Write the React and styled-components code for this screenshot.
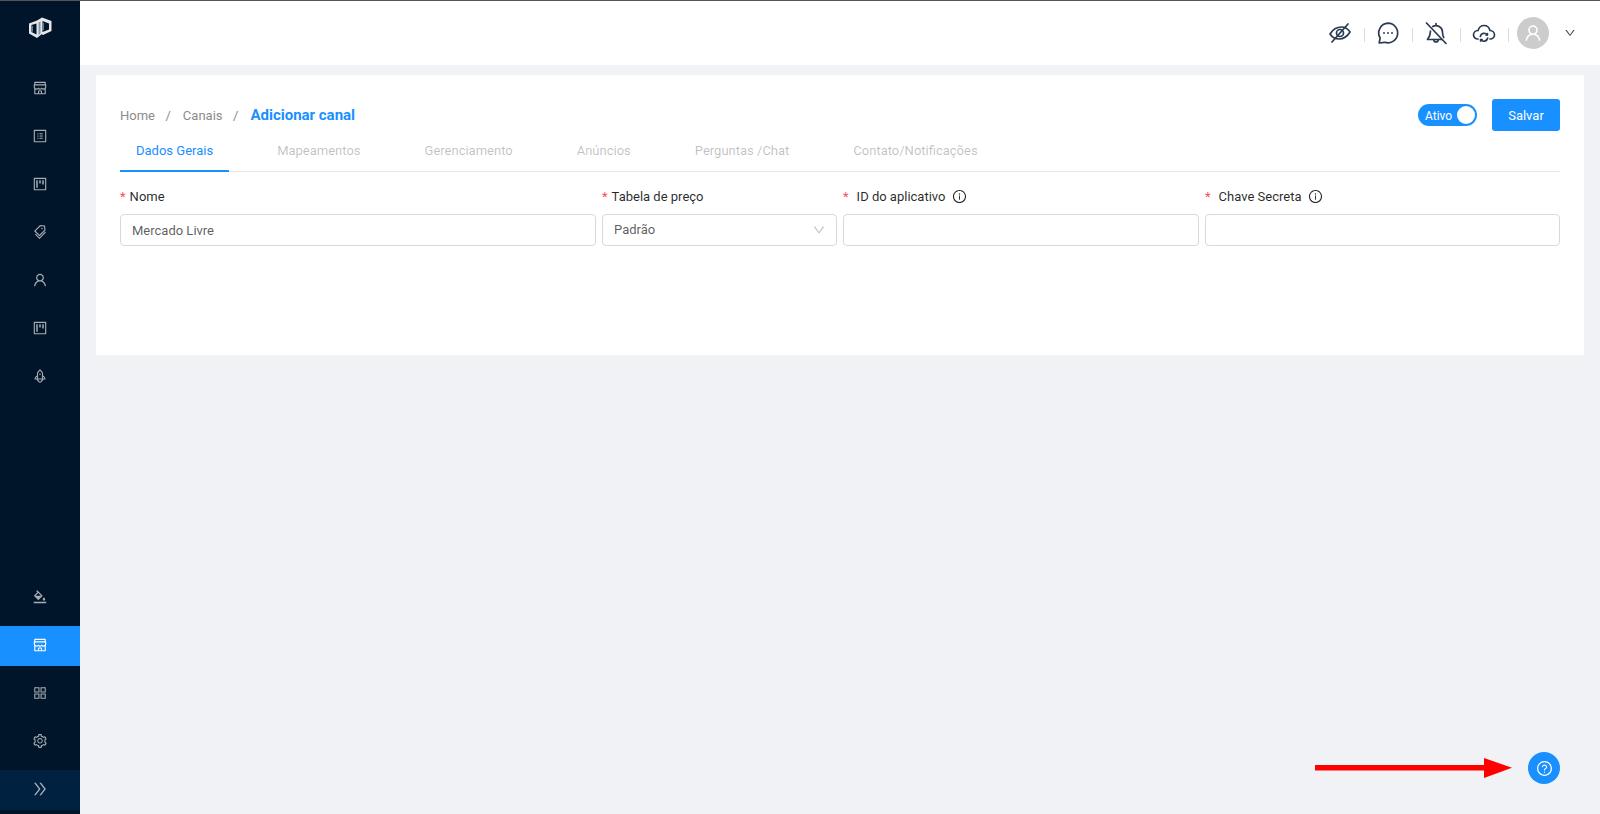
import React from "react";
import styled, { createGlobalStyle } from "styled-components";
import {
  AiOutlineShop,
  AiOutlineProfile,
  AiOutlineProject,
  AiOutlineTags,
  AiOutlineUser,
  AiOutlineRocket,
  AiOutlineBgColors,
  AiOutlineAppstore,
  AiOutlineSetting,
  AiOutlineDoubleRight,
  AiOutlineInfoCircle,
  AiOutlineDown,
  AiOutlineQuestionCircle,
} from "react-icons/ai";

const GlobalStyle = createGlobalStyle`
  html, body {
    margin: 0;
    height: 100%;
    overflow: hidden;
    font-family: Roboto, "Liberation Sans", sans-serif;
    background: #f0f2f5;
  }
  #root { height: 100%; }
  * { box-sizing: border-box; }
`;

const Page = styled.div`
  display: flex;
  flex-direction: column;
  height: 814px;
`;

const TopLine = styled.div`
  height: 1px;
  background: #555;
  flex: none;
`;

const Body = styled.div`
  display: flex;
  flex: 1;
  min-height: 0;
`;

const Sidebar = styled.aside`
  width: 80px;
  flex: none;
  display: flex;
  flex-direction: column;
  background: #001529;
  padding-bottom: 4px;
`;

const LogoBox = styled.div`
  height: 53px;
  display: flex;
  align-items: center;
  justify-content: center;
  margin-bottom: 14px;
`;

const MenuList = styled.nav`
  display: flex;
  flex-direction: column;
  gap: 8px;
`;

const BottomMenu = styled(MenuList)`
  margin-top: auto;
`;

const MenuItem = styled.div`
  height: 40px;
  display: flex;
  align-items: center;
  justify-content: center;
  padding-bottom: ${(p) => (p.$raised ? "2px" : "0")};
  font-size: 16px;
  color: ${(p) => (p.$active ? "#fff" : "rgba(255,255,255,.65)")};
  background: ${(p) => (p.$active ? "#1890ff" : "transparent")};
`;

const Collapse = styled.div`
  height: 40px;
  display: flex;
  align-items: center;
  justify-content: center;
  margin-top: 8px;
  padding-bottom: 2px;
  font-size: 18px;
  color: rgba(255, 255, 255, 0.65);
  background: #002140;
`;

const Main = styled.main`
  flex: 1;
  min-width: 0;
  display: flex;
  flex-direction: column;
`;

const Header = styled.header`
  height: 64px;
  background: #fff;
  display: flex;
  align-items: center;
  justify-content: flex-end;
  padding-right: 24px;
  flex: none;
`;

const HeaderIcon = styled.div`
  width: 24px;
  height: 24px;
  display: flex;
  align-items: center;
  justify-content: center;
  color: #2a3b52;
`;

const HeaderDivider = styled.div`
  width: 1px;
  height: 14px;
  margin: 4px 11px 0 12px;
  background: #ddd;
  align-self: center;
`;

const Avatar = styled.div`
  width: 32px;
  height: 32px;
  margin-left: -3px;
  border-radius: 50%;
  background: #ccc;
  color: #fff;
  font-size: 20px;
  display: flex;
  align-items: center;
  justify-content: center;
`;

const Caret = styled.div`
  margin-left: 15px;
  font-size: 12px;
  color: #2a3b52;
  display: flex;
`;

const Card = styled.section`
  margin: 10px 16px 0;
  height: 280px;
  padding: 24px 24px 0;
  background: #fff;
`;

const TitleRow = styled.div`
  display: flex;
  align-items: center;
  justify-content: space-between;
  height: 32px;
  margin-bottom: 1px;
`;

const Breadcrumb = styled.div`
  display: flex;
  align-items: center;
  font-size: 13px;
  color: #8c8c8c;
`;

const Crumb = styled.span`
  color: ${(p) => (p.$current ? "#1890ff" : "#8c8c8c")};
  font-weight: ${(p) => (p.$current ? 700 : 400)};
  font-size: ${(p) => (p.$current ? "15px" : "13px")};
`;

const Slash = styled.span`
  margin: 0 12px 0 10.5px;
`;

const Actions = styled.div`
  display: flex;
  align-items: center;
  gap: 15px;
`;

const Switch = styled.div`
  width: 59px;
  height: 22px;
  border-radius: 11px;
  background: #1890ff;
  color: #fff;
  font-size: 12px;
  display: flex;
  align-items: center;
  justify-content: space-between;
  padding: 0 2px 0 7px;
`;

const SwitchText = styled.span`
  margin-top: 2px;
`;

const Knob = styled.span`
  width: 18px;
  height: 18px;
  border-radius: 50%;
  background: #fff;
`;

const SaveButton = styled.button`
  width: 68px;
  height: 32px;
  border: 0;
  border-radius: 3px;
  background: #1890ff;
  color: #fff;
  font: 400 13px Roboto, sans-serif;
`;

const Tabs = styled.div`
  display: flex;
  gap: 32px;
  height: 40px;
  border-bottom: 1px solid #e8e8e8;
`;

const Tab = styled.div`
  height: 40px;
  padding: 0 16px;
  line-height: 38px;
  font-size: 13px;
  color: ${(p) => (p.$active ? "#1890ff" : "rgba(0,0,0,.25)")};
  border-bottom: 2px solid ${(p) => (p.$active ? "#1890ff" : "transparent")};
`;

const FormRow = styled.div`
  display: grid;
  grid-template-columns: 476px 235px 356px 355px;
  gap: 6px;
  margin-top: 15px;
`;

const Field = styled.div`
  display: flex;
  flex-direction: column;
`;

const Label = styled.label`
  height: 19px;
  margin-bottom: 8px;
  display: flex;
  align-items: center;
  font-size: 13px;
  color: rgba(0, 0, 0, 0.85);
`;

const Star = styled.span`
  color: #ff4d4f;
  margin-right: ${(p) => (p.$wide ? "8px" : "4px")};
`;

const Info = styled.span`
  display: flex;
  margin: -1px 0 0 7px;
  font-size: 15px;
`;

const Input = styled.div`
  height: 32px;
  display: flex;
  align-items: center;
  justify-content: space-between;
  padding: 0 10px 0 11px;
  border: 1px solid #d9d9d9;
  border-radius: 4px;
  font-size: 13px;
  color: rgba(0, 0, 0, 0.65);
  background: #fff;
`;

const SelectValue = styled.span`
  margin-top: -1px;
`;

const SelectArrow = styled.span`
  display: flex;
  font-size: 14px;
  color: #bfbfbf;
`;

const HelpButton = styled.div`
  position: fixed;
  right: 40px;
  bottom: 30px;
  width: 32px;
  height: 32px;
  border-radius: 50%;
  background: #1890ff;
  color: #fff;
  font-size: 17px;
  display: flex;
  align-items: center;
  justify-content: center;
`;

const Arrow = styled.svg`
  position: fixed;
  left: 1315px;
  top: 758px;
`;

const Logo = () => (
  <svg width="23" height="22" viewBox="0 0 23 22" strokeLinejoin="round">
    <path
      fillRule="evenodd"
      fill="#e3e6ea"
      d="M8 3.500 13 0.500 22.500 4V14L14 18 13 17.500V17L8 21 0 16.500V6.500ZM13.500 4V15L20 12.500V6.500ZM2.500 8V15L7.500 17.500V6.500Z"
    />
    <path d="M9.500 5.500 11.500 4.500V16.500L9.500 18Z" fill="#8d96a1" />
    <path d="M14.500 5.800V13.200M3.500 9V14.800" stroke="#6f7a87" strokeWidth="1" fill="none" />
  </svg>
);

const EyeIcon = () => (
  <svg width="24" height="24" viewBox="0 0 24 24" fill="none" stroke="currentColor" strokeWidth="1.700" strokeLinecap="round" strokeLinejoin="round">
    <path d="M2 13C5 8 9 6 13.500 6c3.500 0 6.500 2 8.500 5-3 5-7 7-11 7-4 0-7-2-9-5Z" />
    <circle cx="12" cy="12" r="3.500" />
    <path d="M4 21 20 3" />
  </svg>
);

const MessageIcon = () => (
  <svg width="24" height="24" viewBox="0 0 24 24" fill="none" stroke="currentColor" strokeWidth="1.700" strokeLinecap="round" strokeLinejoin="round">
    <path d="M12 2.200a9.800 9.800 0 1 1-3.200 19.100L3.200 22l.9-5A9.800 9.800 0 0 1 12 2.200Z" />
    <path d="M8 12h.01M12 12h.01M16 12h.01" strokeWidth="1.900" />
  </svg>
);

const BellIcon = () => (
  <svg width="24" height="24" viewBox="0 0 24 24" fill="none" stroke="currentColor" strokeWidth="1.700" strokeLinecap="round" strokeLinejoin="round">
    <path d="M2.500 2 22 22.500" />
    <path d="M12 2.500V4.500M8.800 5.500A6.500 6.500 0 0 1 18.500 11c0 2.500.4 4.200 1.200 5.500" />
    <path d="M6.500 10c0 3.500-1 6-3 8.500H17.500" />
    <path d="M9.800 18.700c0 3 4.400 3 4.400 0" />
  </svg>
);

const CloudSyncIcon = () => (
  <svg width="24" height="24" viewBox="0 0 24 24" fill="none" stroke="currentColor" strokeWidth="1.700" strokeLinecap="round" strokeLinejoin="round">
    <path d="M6 18C3.500 18 1.500 16.200 1.500 13.800C1.500 11.500 3.500 9.700 6 9.500 7 6.300 9.300 4.500 12 4.500c3 0 5.300 2 6 5 2.500.2 4.500 2 4.500 4.300S20.500 18 18 18" />
    <path d="M8.300 15.500a4 4 0 0 1 7-1.800M15.700 17a4 4 0 0 1-7 1.800" />
    <path d="M15.400 12.500v1.500h-1.500M8.600 20v-1.500h1.500" />
  </svg>
);

const topMenu = [AiOutlineShop, AiOutlineProfile, AiOutlineProject, AiOutlineTags, AiOutlineUser, AiOutlineProject, AiOutlineRocket];
const bottomMenu = [AiOutlineBgColors, AiOutlineShop, AiOutlineAppstore, AiOutlineSetting];
const headerIcons = [EyeIcon, MessageIcon, BellIcon, CloudSyncIcon];
const tabs = ["Dados Gerais", "Mapeamentos", "Gerenciamento", "Anúncios", "Perguntas /Chat", "Contato/Notificações"];

export default function App() {
  return (
    <Page>
      <GlobalStyle />
      <TopLine />
      <Body>
        <Sidebar>
          <LogoBox>
            <Logo />
          </LogoBox>
          <MenuList>
            {topMenu.map((Icon, i) => (
              <MenuItem key={i}>
                <Icon />
              </MenuItem>
            ))}
          </MenuList>
          <BottomMenu>
            {bottomMenu.map((Icon, i) => (
              <MenuItem key={i} $raised $active={i === 1}>
                <Icon />
              </MenuItem>
            ))}
          </BottomMenu>
          <Collapse>
            <AiOutlineDoubleRight />
          </Collapse>
        </Sidebar>
        <Main>
          <Header>
            {headerIcons.map((Icon, i) => (
              <React.Fragment key={i}>
                <HeaderIcon>
                  <Icon />
                </HeaderIcon>
                <HeaderDivider />
              </React.Fragment>
            ))}
            <Avatar>
              <AiOutlineUser />
            </Avatar>
            <Caret>
              <AiOutlineDown />
            </Caret>
          </Header>
          <Card>
            <TitleRow>
              <Breadcrumb>
                <Crumb>Home</Crumb>
                <Slash>/</Slash>
                <Crumb>Canais</Crumb>
                <Slash>/</Slash>
                <Crumb $current>Adicionar canal</Crumb>
              </Breadcrumb>
              <Actions>
                <Switch>
                  <SwitchText>Ativo</SwitchText>
                  <Knob />
                </Switch>
                <SaveButton>Salvar</SaveButton>
              </Actions>
            </TitleRow>
            <Tabs>
              {tabs.map((t, i) => (
                <Tab key={t} $active={i === 0}>
                  {t}
                </Tab>
              ))}
            </Tabs>
            <FormRow>
              <Field>
                <Label>
                  <Star>*</Star>Nome
                </Label>
                <Input>Mercado Livre</Input>
              </Field>
              <Field>
                <Label>
                  <Star>*</Star>Tabela de preço
                </Label>
                <Input>
                  <SelectValue>Padrão</SelectValue>
                  <SelectArrow>
                    <AiOutlineDown />
                  </SelectArrow>
                </Input>
              </Field>
              <Field>
                <Label>
                  <Star $wide>*</Star>ID do aplicativo
                  <Info>
                    <AiOutlineInfoCircle />
                  </Info>
                </Label>
                <Input />
              </Field>
              <Field>
                <Label>
                  <Star $wide>*</Star>Chave Secreta
                  <Info>
                    <AiOutlineInfoCircle />
                  </Info>
                </Label>
                <Input />
              </Field>
            </FormRow>
          </Card>
        </Main>
      </Body>
      <Arrow width="197" height="20" viewBox="0 0 197 20">
        <rect x="0" y="7" width="170" height="5.500" fill="#f00" />
        <path d="M197 9.800 L169 0 V20 Z" fill="#f00" />
      </Arrow>
      <HelpButton>
        <AiOutlineQuestionCircle />
      </HelpButton>
    </Page>
  );
}
